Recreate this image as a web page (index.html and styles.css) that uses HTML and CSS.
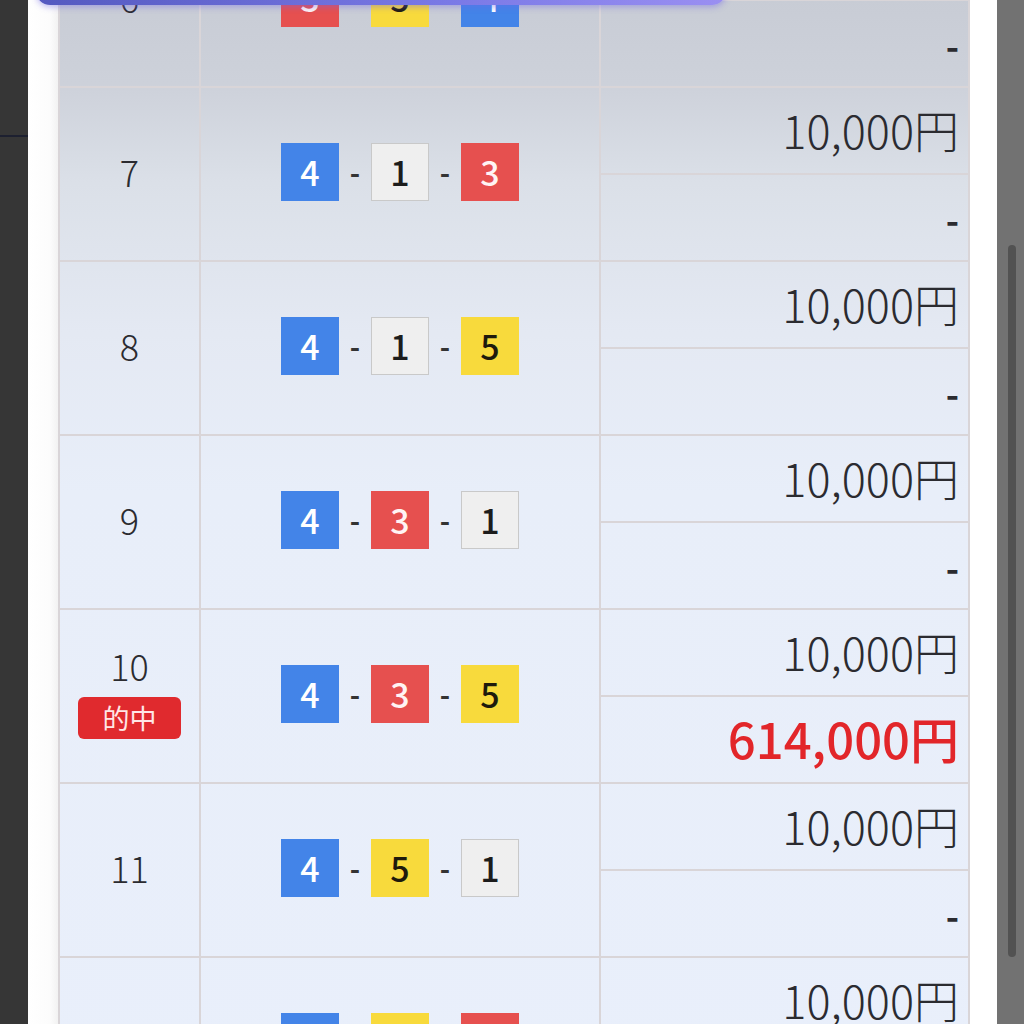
FILE: index.html
```html
<!DOCTYPE html>
<html lang="ja">
<head>
<meta charset="UTF-8">
<meta name="viewport" content="width=device-width, initial-scale=1.0">
<title>購入内容</title>
<link rel="stylesheet" href="styles.css">
</head>
<body>

<div class="rail-left">
    <div class="rail-line"></div>
</div>

<div class="modal">
    <div class="modal-header"></div>

    <div class="sheet">
        <table class="bets">
            <colgroup>
                <col class="col-no">
                <col class="col-combo">
                <col class="col-amount">
            </colgroup>
            <tbody>
                <tr>
                    <td class="no" rowspan="2">6</td>
                    <td class="combo" rowspan="2">
                        <span class="waku w3">3</span><span class="sep">-</span><span class="waku w5">5</span><span class="sep">-</span><span class="waku w4">4</span>
                    </td>
                    <td class="amount">10,000円</td>
                </tr>
                <tr><td class="payout">-</td></tr>

                <tr>
                    <td class="no" rowspan="2">7</td>
                    <td class="combo" rowspan="2">
                        <span class="waku w4">4</span><span class="sep">-</span><span class="waku w1">1</span><span class="sep">-</span><span class="waku w3">3</span>
                    </td>
                    <td class="amount">10,000円</td>
                </tr>
                <tr><td class="payout">-</td></tr>

                <tr>
                    <td class="no" rowspan="2">8</td>
                    <td class="combo" rowspan="2">
                        <span class="waku w4">4</span><span class="sep">-</span><span class="waku w1">1</span><span class="sep">-</span><span class="waku w5">5</span>
                    </td>
                    <td class="amount">10,000円</td>
                </tr>
                <tr><td class="payout">-</td></tr>

                <tr>
                    <td class="no" rowspan="2">9</td>
                    <td class="combo" rowspan="2">
                        <span class="waku w4">4</span><span class="sep">-</span><span class="waku w3">3</span><span class="sep">-</span><span class="waku w1">1</span>
                    </td>
                    <td class="amount">10,000円</td>
                </tr>
                <tr><td class="payout">-</td></tr>

                <tr>
                    <td class="no" rowspan="2">
                        <div>10</div>
                        <span class="hit">的中</span>
                    </td>
                    <td class="combo" rowspan="2">
                        <span class="waku w4">4</span><span class="sep">-</span><span class="waku w3">3</span><span class="sep">-</span><span class="waku w5">5</span>
                    </td>
                    <td class="amount">10,000円</td>
                </tr>
                <tr><td class="payout win">614,000円</td></tr>

                <tr>
                    <td class="no" rowspan="2">11</td>
                    <td class="combo" rowspan="2">
                        <span class="waku w4">4</span><span class="sep">-</span><span class="waku w5">5</span><span class="sep">-</span><span class="waku w1">1</span>
                    </td>
                    <td class="amount">10,000円</td>
                </tr>
                <tr><td class="payout">-</td></tr>

                <tr>
                    <td class="no" rowspan="2">12</td>
                    <td class="combo" rowspan="2">
                        <span class="waku w4">4</span><span class="sep">-</span><span class="waku w5">5</span><span class="sep">-</span><span class="waku w3">3</span>
                    </td>
                    <td class="amount">10,000円</td>
                </tr>
                <tr><td class="payout">-</td></tr>
            </tbody>
        </table>
    </div>
</div>

<div class="rail-right">
    <div class="thumb"></div>
</div>

</body>
</html>
```

FILE: styles.css
```css
html, body {
    margin: 0;
    padding: 0;
}

body {
    display: flex;
    height: 1024px;
    overflow: hidden;
    background-color: #363636;
    font-family: "Noto Sans CJK JP", "Noto Sans", sans-serif;
    color: #2b2b30;
}

.rail-left {
    width: 28px;
    flex-shrink: 0;
    background-color: #363636;
}

.rail-line {
    margin-top: 135px;
    height: 2px;
    background-color: #1d2030;
}

.modal {
    position: relative;
    width: 969px;
    flex-shrink: 0;
    padding: 0 29px 0 30px;
    box-sizing: border-box;
    background: linear-gradient(to right, #ffffff 0, #fcfcfc 22px, #f2f2f2 30px, #ffffff 30px);
    overflow: hidden;
}

.modal-header {
    position: absolute;
    top: -20px;
    left: 8px;
    width: 690px;
    height: 25px;
    border-radius: 0 0 14px 14px;
    background: linear-gradient(to right, #5459c0, #7a79e6 60%, #9a8ff2);
    box-shadow: 0 2px 6px rgba(110, 100, 230, 0.45);
    z-index: 2;
}

.sheet {
    margin-top: -88px;
}

.bets {
    width: 910px;
    table-layout: fixed;
    border-collapse: collapse;
    background: linear-gradient(to bottom, #c3c7d0 0, #cdd1da 170px, #dbe0e8 270px, #e4e9f3 420px, #e8eef9 580px, #e9effb 100%);
}

.col-no {
    width: 141px;
}

.col-combo {
    width: 400px;
}

.col-amount {
    width: 369px;
}

.bets td {
    border: 2px solid #d9d5d8;
    height: 85px;
    padding: 0;
}

.bets td.no {
    text-align: center;
    font-size: 36px;
    font-weight: 300;
    line-height: 1;
    padding-bottom: 6px;
}

.hit {
    display: inline-block;
    margin-top: 14px;
    width: 103px;
    height: 42px;
    line-height: 42px;
    border-radius: 6px;
    background-color: #e02a2e;
    color: #ffe6e6;
    font-size: 27px;
    font-weight: 400;
}

.bets td.combo {
    text-align: center;
    font-size: 0;
    padding-bottom: 4px;
}

.waku {
    display: inline-block;
    vertical-align: middle;
    width: 58px;
    height: 58px;
    line-height: 58px;
    box-sizing: border-box;
    font-size: 34px;
    font-weight: 500;
    text-align: center;
}

.w1 {
    background-color: #efefef;
    border: 1px solid #c9c9c9;
    line-height: 56px;
    color: #1c1c1c;
}

.w3 {
    background-color: #e6504f;
    color: #fff4f4;
}

.w4 {
    background-color: #4384e8;
    color: #ffffff;
}

.w5 {
    background-color: #f8da3c;
    color: #1e1a0c;
}

.sep {
    display: inline-block;
    vertical-align: middle;
    width: 32px;
    font-size: 28px;
    font-weight: bold;
    color: #333;
}

.bets td.amount,
.bets td.payout {
    text-align: right;
    padding-right: 9px;
    font-size: 45px;
    font-weight: 300;
    line-height: 1;
}

.bets td.amount {
    height: 82px;
    padding-bottom: 3px;
}

.bets td.payout {
    font-weight: bold;
    font-size: 36px;
}

.bets td.payout.win {
    height: 81px;
    padding-bottom: 4px;
    color: #e2262a;
    font-size: 49px;
    font-weight: 500;
}

.rail-right {
    flex: 1;
    background-color: #727272;
    padding-left: 11px;
}

.thumb {
    margin-top: 245px;
    width: 8px;
    height: 712px;
    border-radius: 4px;
    background-color: #525252;
}
```
